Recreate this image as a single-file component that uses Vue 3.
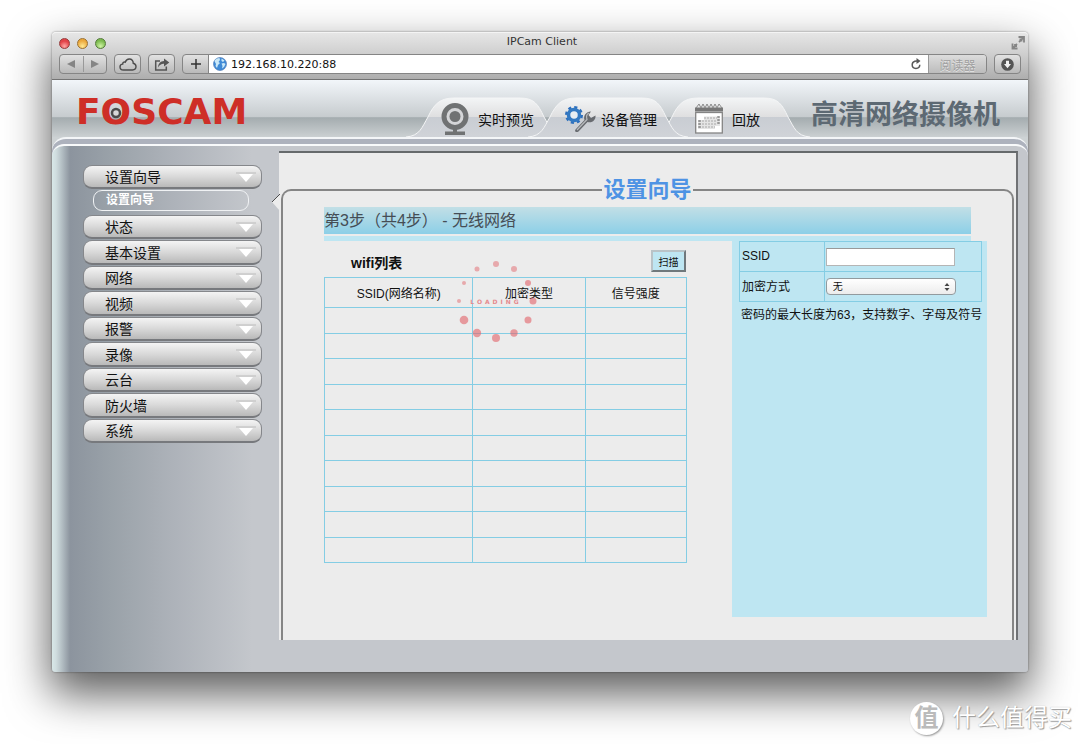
<script setup>
import { ref } from 'vue'

const address = ref('192.168.10.220:88')
const ssid = ref('')
const encryption = ref('无')
const menu = ['状态', '基本设置', '网络', '视频', '报警', '录像', '云台', '防火墙', '系统']
const columns = ['SSID(网络名称)', '加密类型', '信号强度']
const dots = [
  [45, 8, 3], [63, 13, 3], [77, 27, 3], [82, 45, 3.5], [77, 64, 3.5], [63, 77, 3.7],
  [45, 82, 4], [26, 77, 4.2], [13, 64, 4.3], [8, 45, 2], [13, 27, 2], [26, 13, 2.5]
]
</script>

<template>
  <div class="desktop">
    <div class="window">
      <header class="chrome">
        <div class="titlebar">
          <div class="lights">
            <button class="light red" aria-label="关闭"></button>
            <button class="light amber" aria-label="最小化"></button>
            <button class="light green" aria-label="缩放"></button>
          </div>
          <span class="title">IPCam Client</span>
          <button class="expand" aria-label="全屏">
            <svg width="14" height="14" viewBox="0 0 14 14" fill="none" stroke="#858585" stroke-width="1.8">
              <path d="M7.5 1H13V6.500M12.500 1.500L8 6M8.500 3.500H10.500V5.500M1.500 7.500V12.500H6.500M2 12L6 8M4 8V10H6" />
            </svg>
          </button>
        </div>
        <div class="toolbar">
          <div class="tool history">
            <button aria-label="后退"><svg width="8" height="8" viewBox="0 0 8 8"><path d="M8 0V8L0 4Z" fill="#858585" /></svg></button>
            <button aria-label="前进"><svg width="8" height="8" viewBox="0 0 8 8"><path d="M0 0V8L8 4Z" fill="#858585" /></svg></button>
          </div>
          <button class="tool" aria-label="iCloud 标签页">
            <svg width="18" height="13" viewBox="0 0 18 13" fill="none" stroke="#4c4c4c" stroke-width="1.4">
              <path d="M4.500 12C2.300 12 1 10.700 1 9C1 7.300 2.300 6.200 3.700 6.100C3.500 4.600 5 3.600 6.200 4.200C7 2.100 8.500 1 10.300 1C12.800 1 14.300 2.900 14.200 5.200C16 5.600 17 6.900 17 8.600C17 10.700 15.500 12 13.500 12Z" />
            </svg>
          </button>
          <button class="tool" aria-label="共享">
            <svg width="16" height="13" viewBox="0 0 16 13">
              <path d="M6 3H1.700V12H12.300V8.500" fill="none" stroke="#555" stroke-width="1.500" />
              <path d="M4 9.500C4.300 5.500 6.500 3.200 10 3.100V0.500L15.300 4.500L10 8.500V5.800C7.400 5.700 5.600 6.800 4 9.500Z" fill="#555" />
            </svg>
          </button>
          <div class="tool location">
            <button class="plus" aria-label="添加书签"><svg width="10" height="10" viewBox="0 0 10 10" stroke="#333" stroke-width="1.500"><path d="M5 0V10M0 5H10" /></svg></button>
            <label class="address">
              <svg width="14" height="14" viewBox="0 0 14 14">
                <circle cx="7" cy="7" r="6.500" fill="#3f8ad6" stroke="#4772ac" stroke-width=".6" />
                <path d="M1.500 4C2.500 2 4.500 1 6.500 1L7 3L5.500 5L7 6L5 8L4 11L2.500 9L3 7ZM8.500 1.500L11.500 3.500L10 5L8.500 4ZM8.500 6.500L11 6L12.500 7L11 10L9 11.500L9.500 9Z" fill="#c9e8f8" />
              </svg>
              <input v-model="address" type="text" aria-label="地址" />
            </label>
            <button class="reload" aria-label="重新载入">
              <svg width="10" height="12" viewBox="0 0 10 12"><path d="M7.800 4C6 1.900 1.200 3 1.200 6.800C1.200 11.600 8.600 11.700 8.800 6.800" fill="none" stroke="#5a5a5a" stroke-width="1.500" /><path d="M5.500 0L9.500 3L5.500 6Z" fill="#5a5a5a" /></svg>
            </button>
            <button class="reader" disabled>阅读器</button>
          </div>
          <button class="tool" aria-label="下载">
            <svg width="13" height="13" viewBox="0 0 13 13"><circle cx="6.500" cy="6.500" r="6.300" fill="#555" /><path d="M5 2.700H8V6H10L6.500 10.200L3 6H5Z" fill="#f2f2f2" /></svg>
          </button>
        </div>
      </header>

      <div class="page">
        <div class="banner">
          <a class="logo" href="#">F<span class="lens">O<svg width="12" height="12" viewBox="0 0 12 12"><circle cx="6" cy="6" r="4" fill="#d8d8d8" stroke="#4b4b4b" stroke-width="2.500" /></svg></span>SCAM</a>
          <nav class="tabs">
            <a v-for="(name, i) in ['实时预览', '设备管理', '回放']" :key="name" href="#" class="tab" :class="'tab-' + i">
              <svg class="shape" viewBox="0 0 160 40" preserveAspectRatio="none">
                <defs>
                  <linearGradient :id="'fill' + i" x1="0" y1="0" x2="0" y2="1">
                    <stop offset="0" stop-color="#f3f5f6" /><stop offset=".48" stop-color="#dfdfe0" />
                    <stop offset=".49" stop-color="#c9cdd3" /><stop offset="1" stop-color="#d0d3d8" />
                  </linearGradient>
                </defs>
                <path d="M0 40C14 39 16 30 22 20C28 7 34 1 48 1H114C128 1 132 7 138 20C144 30 146 39 160 40" :fill="`url(#fill${i})`" stroke="#f4f5f6" stroke-width="1" />
              </svg>
              <svg v-if="i === 0" class="icon" width="28" height="32" viewBox="0 0 28 32">
                <circle cx="14" cy="13.500" r="11" fill="#d5d6d8" stroke="#707273" stroke-width="5" />
                <circle cx="14" cy="13.500" r="5.500" fill="#707273" />
                <path d="M12 26H16V28.500H24V32H4V28.500H12Z" fill="#707273" />
              </svg>
              <svg v-else-if="i === 1" class="icon" width="32" height="28" viewBox="0 0 32 28">
                <circle cx="9" cy="10" r="7.500" fill="none" stroke="#2d6fbd" stroke-width="3" stroke-dasharray="3 2.890" />
                <circle cx="9" cy="10" r="5.500" fill="#e7edf2" stroke="#3379c2" stroke-width="3.500" />
                <path d="M10.500 24.500L19.500 15C18 11 21 6.500 26 6.500L23.500 10L26 13L30.500 10.500C31 15 27 18.500 22.500 17L13.500 26.500C11.500 28 9 26.500 10.500 24.500Z" fill="#686b70" />
                <path d="M12 25L22 14.500C21 11.500 22 9 24 8" fill="none" stroke="#b7babd" stroke-width="1.200" />
              </svg>
              <svg v-else class="icon" width="28" height="30" viewBox="0 0 28 30">
                <rect x=".7" y="8.500" width="26.600" height="20.500" fill="#fff" stroke="#848484" stroke-width="1.300" />
                <rect y="3.500" width="28" height="4" fill="#777" />
                <path d="M1 4L4 0L6 4L8 0L10 4L12 0L14 4L16 0L18 4L20 0L22 4L24 0L27 4" fill="none" stroke="#888" />
                <path d="M9 12.500H25V22H20V25H3V16H9Z" fill="#e4e4e4" />
                <path d="M9 14H22M4 17H22M4 20H22M4 23H20" stroke="#c6c6c6" stroke-width="2" stroke-dasharray="2 1" />
                <path d="M4.500 16V25M23.500 12V21" stroke="#999" stroke-width="2.500" stroke-dasharray="2 1" />
              </svg>
              <span>{{ name }}</span>
            </a>
          </nav>
          <strong class="slogan">高清网络摄像机</strong>
        </div>

        <div class="rim">
          <div class="body">
            <nav class="sidebar">
              <button class="item first">设置向导<svg width="20" height="11" viewBox="0 0 20 11"><path d="M0 1H20" stroke="#bdbdbd" /><path d="M3 2H17L10 10Z" fill="#fff" /></svg></button>
              <a class="current" href="#">设置向导</a>
              <ul>
                <li v-for="name in menu" :key="name">
                  <button class="item">{{ name }}<svg width="20" height="11" viewBox="0 0 20 11"><path d="M0 1H20" stroke="#bdbdbd" /><path d="M3 2H17L10 10Z" fill="#fff" /></svg></button>
                </li>
              </ul>
            </nav>

            <main class="content">
              <svg class="pointer" width="9" height="20" viewBox="0 0 9 20"><path d="M9 1L1 9L9 18Z" fill="#ececec" /><path d="M9 1L1 9" stroke="#4e4e4e" /></svg>
              <fieldset>
                <legend>设置向导</legend>
                <div class="step"><h2>第3步（共4步） - 无线网络</h2></div>
                <div class="columns">
                  <section class="wifi">
                    <div class="wifi-head">
                      <h3>wifi列表</h3>
                      <button class="scan">扫描</button>
                    </div>
                    <table class="networks">
                      <thead>
                        <tr><th v-for="c in columns" :key="c" scope="col">{{ c }}</th></tr>
                      </thead>
                      <tbody>
                        <tr v-for="r in 10" :key="r"><td v-for="c in columns" :key="c"></td></tr>
                      </tbody>
                    </table>
                    <div class="loader" role="status">
                      <svg width="90" height="90" viewBox="0 0 90 90"><circle v-for="(d, i) in dots" :key="i" :cx="d[0]" :cy="d[1]" :r="d[2]" fill="#e2666c" :opacity="i > 8 || i < 2 ? 0.5 : 0.62" /></svg>
                      <span>LOADING</span>
                    </div>
                  </section>

                  <form class="details" @submit.prevent>
                    <table>
                      <tbody>
                        <tr>
                          <th scope="row"><label for="ssid">SSID</label></th>
                          <td><input id="ssid" v-model="ssid" type="text" /></td>
                        </tr>
                        <tr>
                          <th scope="row"><label for="enc">加密方式</label></th>
                          <td>
                            <div class="picker">
                              <select id="enc" v-model="encryption"><option>无</option></select>
                              <svg width="6" height="8" viewBox="0 0 6 8"><path d="M3 0L5.500 3H.5ZM3 8L.5 5H5.500Z" fill="#444" /></svg>
                            </div>
                          </td>
                        </tr>
                      </tbody>
                    </table>
                    <p>密码的最大长度为63，支持数字、字母及符号</p>
                  </form>
                </div>
              </fieldset>
            </main>
          </div>
        </div>
      </div>
    </div>
    <div class="watermark"><span class="badge">值</span><span>什么值得买</span></div>
  </div>
</template>

<style>
body {
  background: #fff;
}
</style>

<style scoped>
* {
  box-sizing: border-box;
}
.desktop {
  position: relative;
  min-height: 100vh;
  padding: 32px 52px 72px;
  overflow: hidden;
  font-family: "Liberation Sans", "Noto Sans CJK SC", sans-serif;
  font-size: 12px;
  color: #111;
}
button {
  margin: 0;
  padding: 0;
  border: 0;
  background: none;
  font: inherit;
  color: inherit;
}
svg {
  display: block;
  flex: none;
}
a {
  color: inherit;
  text-decoration: none;
}
.window {
  border-radius: 4px;
  box-shadow: 0 20px 44px 2px rgba(0, 0, 0, .64), 0 0 2px rgba(0, 0, 0, .5);
}
.chrome {
  height: 48px;
  border-top: 1px solid #f4f4f4;
  border-bottom: 1px solid #747474;
  border-radius: 4px 4px 0 0;
  background: linear-gradient(#e6e6e6, #cfcfcf 45%, #aeaeae);
}
.titlebar {
  display: grid;
  grid-template-columns: 1fr auto 1fr;
  align-items: center;
  height: 20px;
  padding: 0 3px 0 7px;
}
.lights {
  display: flex;
  gap: 7px;
}
.light {
  width: 11px;
  height: 11px;
  border: 1px solid #777;
  border-radius: 50%;
}
.red {
  border-color: #963c3c;
  background: radial-gradient(circle at 50% 80%, #ffa8a5, #e24348 60%);
}
.amber {
  border-color: #9a7030;
  background: radial-gradient(circle at 50% 80%, #ffe993, #eca83b 65%);
}
.green {
  border-color: #54793a;
  background: radial-gradient(circle at 50% 80%, #d0f5a4, #7cba4f 65%);
}
.title {
  font-family: "DejaVu Sans", sans-serif;
  font-size: 11px;
  line-height: 16px;
  padding-bottom: 2px;
  color: #333;
}
.expand {
  justify-self: end;
}
.toolbar {
  display: flex;
  gap: 7px;
  padding: 1px 7px 0;
}
.tool {
  display: flex;
  align-items: center;
  justify-content: center;
  width: 27px;
  height: 20px;
  border: 1px solid #858585;
  border-radius: 4px;
  background: linear-gradient(#e2e2e2, #b9b9b9);
}
.history {
  width: 48px;
}
.history button {
  display: flex;
  flex: 1;
  align-items: center;
  justify-content: center;
  height: 16px;
}
.history button + button {
  border-left: 1px solid #999;
}
.location {
  flex: 1;
  overflow: hidden;
}
.plus,
.reload {
  display: flex;
  align-items: center;
  justify-content: center;
  align-self: stretch;
  width: 26px;
}
.plus {
  border-right: 1px solid #858585;
}
.reload {
  background: #fff;
  width: 24px;
}
.address {
  display: flex;
  flex: 1;
  align-items: center;
  gap: 4px;
  height: 18px;
  padding-left: 4px;
  background: #fff;
}
.address input {
  flex: 1;
  min-width: 0;
  height: 18px;
  padding: 0;
  border: 0;
  outline: 0;
  background: transparent;
  font-family: "DejaVu Sans", sans-serif;
  font-size: 11px;
  color: #111;
}
.reader {
  align-self: stretch;
  width: 58px;
  border-left: 1px solid #999;
  background: linear-gradient(#dcdcdc, #bcbcbc);
  color: #a0a0a0;
  text-shadow: 0 1px 0 #e4e4e4;
}
.page {
  border-radius: 0 0 4px 4px;
  background: #cdd2d4;
}
.banner {
  display: flex;
  align-items: flex-end;
  height: 57px;
  padding: 0 28px 0 24px;
  background: linear-gradient(#f2f6fa, #c6cbce 65%, #a4acaf 66%, #cbd0d2);
}
.logo {
  flex: 1;
  align-self: center;
  padding-top: 6px;
  font-family: "DejaVu Sans", sans-serif;
  font-size: 36px;
  font-weight: bold;
  line-height: 36px;
  color: #ce2e27;
}
.lens {
  position: relative;
}
.lens svg {
  position: absolute;
  top: 16px;
  left: 9px;
}
.tabs {
  display: flex;
  margin-right: 1px;
}
.tab {
  position: relative;
  display: flex;
  align-items: center;
  gap: 9px;
  width: 160px;
  height: 40px;
  padding: 4px 0 0 35px;
  font-size: 14px;
}
.tab + .tab {
  margin-left: -38px;
}
.tab-1 {
  z-index: 1;
}
.tab + .tab-1 {
  gap: 4px;
  padding-left: 37px;
}
.tab + .tab-2 {
  padding-left: 45px;
}
.shape {
  position: absolute;
  inset: 0;
  width: 100%;
  height: 100%;
}
.icon,
.tab span {
  position: relative;
}
.slogan {
  padding-bottom: 5px;
  font-size: 27px;
  line-height: 34px;
  color: #5d6973;
}
.rim {
  padding-top: 5px;
  border-top: 2px solid #f4f6f8;
  border-radius: 14px 14px 4px 4px;
  background: #adb2bd;
}
.body {
  display: flex;
  padding: 5px 10px 32px 0;
  border-top: 2px solid #f8fafb;
  border-radius: 12px 12px 4px 4px;
  background: linear-gradient(90deg, #d8e8e8, #d0dddf 4px, #8c949e 18px, #9aa2a9 60px, #adb2b9 120px, #c4c7cc 200px);
}
.sidebar {
  width: 227px;
  padding: 14px 17px 0 31px;
}
.sidebar ul {
  display: flex;
  flex-direction: column;
  gap: 1px;
  margin: 4px 0 0;
  padding: 0;
  list-style: none;
}
.item {
  display: flex;
  align-items: center;
  justify-content: space-between;
  width: 100%;
  height: 24px;
  padding: 1px 5px 0 21px;
  border: 1px solid #85878b;
  border-bottom: 2px solid #77797d;
  border-radius: 9px;
  background: linear-gradient(#f4f4f4, #d9d9d9 50%, #b9b9b9);
  font-size: 14px;
  line-height: 20px;
}
.sidebar li:nth-child(even) .item {
  height: 25px;
}
.sidebar li {
  display: flex;
}
.current {
  display: block;
  width: 156px;
  margin: 1px 0 0 10px;
  padding-left: 12px;
  border: 1px solid #f0f2f4;
  border-radius: 9px;
  font-weight: bold;
  line-height: 19px;
  color: #fff;
}
.content {
  position: relative;
  flex: 1;
  min-width: 0;
  padding: 24px 2px 0;
  border-top: 2px solid #666a6c;
  border-right: 2px solid #707275;
  background: #ececec;
}
.pointer {
  position: absolute;
  top: 40px;
  left: -8px;
}
fieldset {
  min-width: 0;
  min-height: 463px;
  margin: 0;
  padding: 4px 25px 23px;
  border: 2px solid #858585;
  border-bottom: 0;
  border-radius: 10px 10px 0 0;
}
legend {
  margin: 0 auto;
  padding: 0 1px;
  font-size: 22px;
  font-weight: bold;
  line-height: 26px;
  color: #4e93e4;
}
.step {
  margin: 0 16px 0 16px;
  padding-bottom: 2px;
  border-bottom: 5px solid #bee6f2;
}
h2 {
  margin: 0;
  background: linear-gradient(#c2dfe6, #8ccfe7);
  font-size: 16px;
  font-weight: normal;
  line-height: 27px;
  color: #454d55;
}
.columns {
  display: grid;
  grid-template-columns: 363fr 255fr;
  gap: 45px;
  margin-left: 16px;
}
.wifi {
  position: relative;
}
.wifi-head {
  display: flex;
  align-items: center;
  justify-content: space-between;
  height: 36px;
  padding: 4px 1px 0 27px;
}
h3 {
  margin: 0;
  padding-top: 4px;
  font-size: 14px;
  line-height: 20px;
}
.scan {
  width: 35px;
  height: 22px;
  border: 2px solid;
  border-color: #b9c3c7 #70787c #70787c #b9c3c7;
  background: #bee6f2;
  font-size: 10px;
}
table {
  width: 100%;
  border-collapse: collapse;
  table-layout: fixed;
}
th,
td {
  padding: 0;
  border: 1px solid #84cde4;
  font-weight: normal;
}
.networks thead tr {
  height: 30px;
}
.networks tbody tr {
  height: 25px;
}
.networks tbody tr:nth-child(odd) {
  height: 26px;
}
.networks th:nth-child(1) {
  width: 41%;
}
.networks th:nth-child(2) {
  width: 31%;
}
.loader {
  position: absolute;
  top: 15px;
  left: 35%;
  display: grid;
  place-items: center;
  pointer-events: none;
}
.loader svg,
.loader span {
  grid-area: 1 / 1;
}
.loader span {
  font-family: "DejaVu Sans", sans-serif;
  font-size: 6px;
  font-weight: bold;
  letter-spacing: 3px;
  color: #e5888c;
}
.details {
  min-height: 376px;
  padding: 0 5px 0 7px;
  background: #bee6f2;
}
.details tr {
  height: 30px;
}
.details th {
  width: 35%;
  padding: 0 0 2px 2px;
  text-align: left;
}
.details td {
  padding-left: 1px;
}
.details input {
  display: block;
  width: 129px;
  height: 18px;
  border: 1px solid #b5b5b5;
  border-top-color: #999;
  background: #fff;
}
.picker {
  position: relative;
  width: 130px;
}
.picker svg {
  position: absolute;
  top: 5px;
  right: 6px;
}
select {
  display: block;
  width: 100%;
  height: 17px;
  padding: 0 6px;
  border: 1px solid #929a9e;
  border-radius: 4px;
  appearance: none;
  background: linear-gradient(#fff, #ececec);
  font-family: inherit;
  font-size: 10px;
  line-height: 15px;
  color: #111;
}
p {
  margin: 4px -5px 0 2px;
  line-height: 18px;
  white-space: nowrap;
}
.watermark {
  position: absolute;
  right: 8px;
  bottom: 9px;
  display: flex;
  align-items: center;
  gap: 9px;
  font-size: 24px;
  line-height: 34px;
  color: #fff;
  text-shadow: 1px 1px 1px #999, 0 0 1px #aaa;
}
.badge {
  width: 33px;
  height: 33px;
  border-radius: 50%;
  background: #fff;
  box-shadow: 1px 1px 2px #999;
  font-weight: bold;
  line-height: 31px;
  text-align: center;
  color: #bbb;
  text-shadow: none;
}
</style>
